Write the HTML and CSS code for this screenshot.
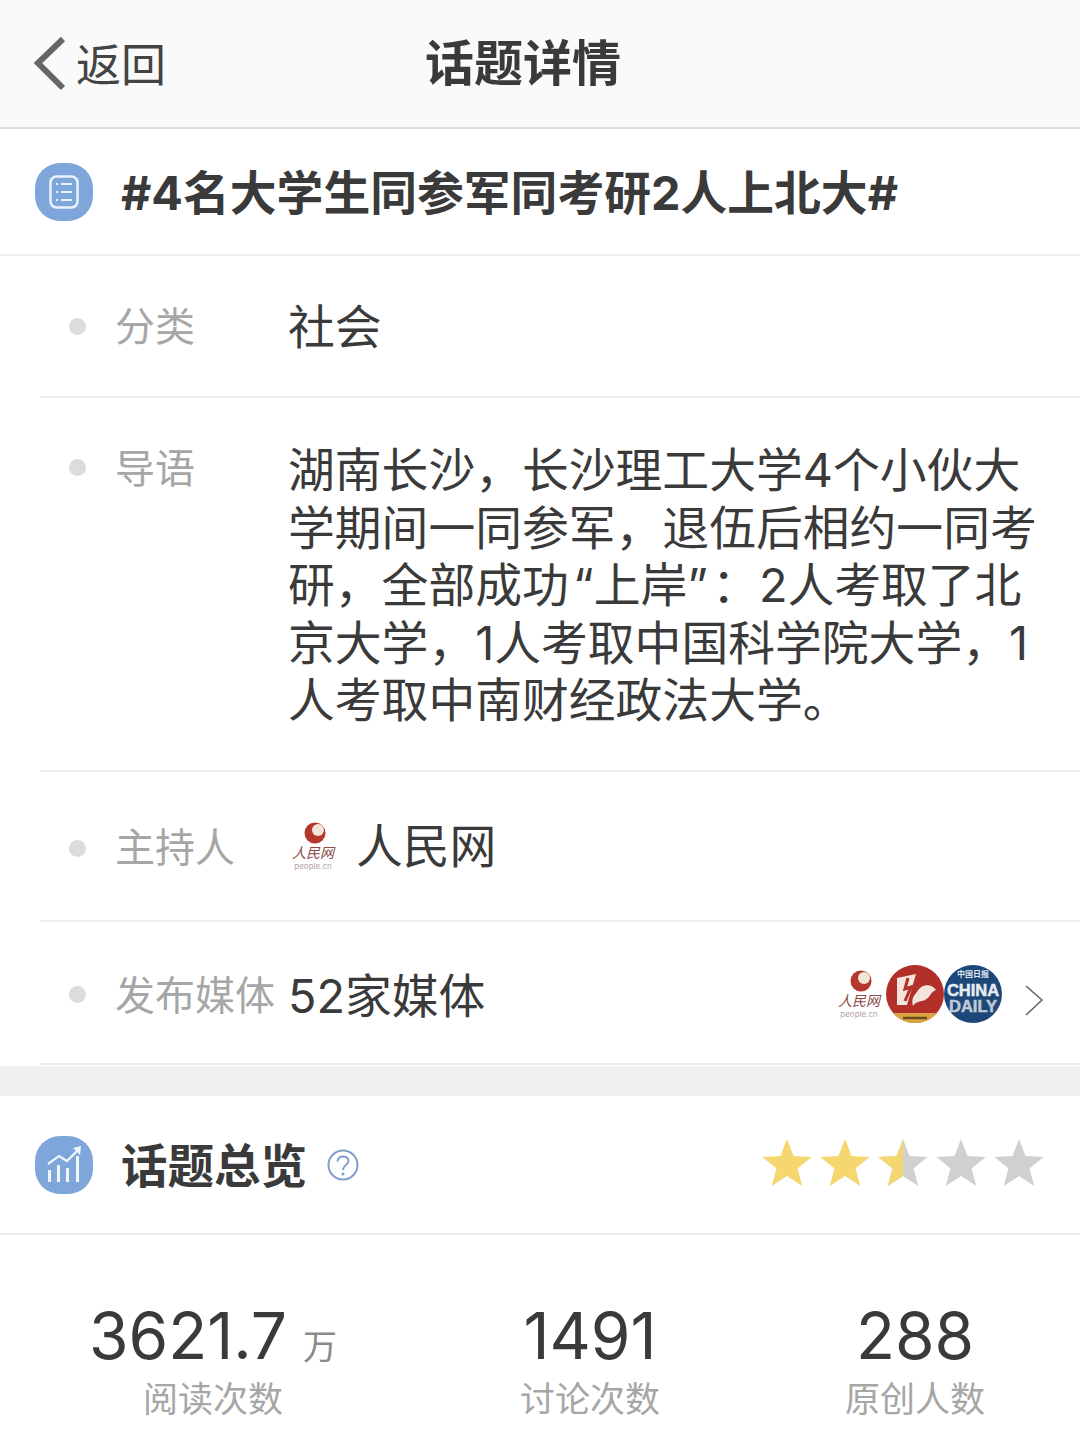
FILE: index.html
```html
<!DOCTYPE html>
<html lang="zh-CN">
<head>
<meta charset="UTF-8">
<title>话题详情</title>
<link rel="stylesheet" href="styles.css">
</head>
<body>
<header class="top-bar">
    <div class="back">
        <svg class="back-arrow" width="34" height="56" viewBox="0 0 34 56"><path d="M30 3 L5 27 L30 52" fill="none" stroke="#666" stroke-width="6"/></svg>
        <span class="back-text">返回</span>
    </div>
    <h1 class="page-title">话题详情</h1>
</header>

<section class="section-head topic-head">
    <svg class="round-icon" viewBox="0 0 58 58">
        <rect width="58" height="58" rx="25" fill="#7ea6da"/>
        <rect x="15.5" y="13.5" width="27" height="31" rx="6" fill="none" stroke="#e9f1fb" stroke-width="2.5"/>
        <path d="M21 21h2M26 21h11M21 29h2M26 29h11M21 37h2M26 37h11" stroke="#e9f1fb" stroke-width="2.2" fill="none"/>
    </svg>
    <h2 class="topic-title">#4名大学生同参军同考研2人上北大#</h2>
</section>

<section class="info-list">
    <div class="info-row row-category">
        <i class="dot"></i>
        <span class="info-label">分类</span>
        <span class="info-value">社会</span>
    </div>
    <div class="info-row row-intro">
        <i class="dot"></i>
        <span class="info-label">导语</span>
        <p class="info-value intro-text">湖南长沙，长沙理工大学4个小伙大学期间一同参军，退伍后相约一同考研，全部成功&#8202;“上岸”&#8202;：2人考取了北京大学，1人考取中国科学院大学，1人考取中南财经政法大学。</p>
    </div>
    <div class="info-row row-host">
        <i class="dot"></i>
        <span class="info-label">主持人</span>
        <svg class="people-logo host-logo" viewBox="0 0 48 52">
            <circle cx="27" cy="13" r="10.500" fill="#b5382c"/>
            <circle cx="30" cy="10" r="6" fill="#f3e6d8"/>
            <text x="25" y="38" text-anchor="middle" class="logo-cn">人民网</text>
            <text x="25" y="49" text-anchor="middle" class="logo-en">people.cn</text>
        </svg>
        <span class="info-value">人民网</span>
    </div>
    <div class="info-row row-media">
        <i class="dot"></i>
        <span class="info-label">发布媒体</span>
        <span class="info-value">52家媒体</span>
        <div class="media-logos">
            <svg class="people-logo" viewBox="0 0 48 52">
                <circle cx="27" cy="13" r="10.500" fill="#b5382c"/>
                <circle cx="30" cy="10" r="6" fill="#f3e6d8"/>
                <text x="25" y="38" text-anchor="middle" class="logo-cn">人民网</text>
                <text x="25" y="49" text-anchor="middle" class="logo-en">people.cn</text>
            </svg>
            <svg class="media-badge" viewBox="0 0 58 58">
                <circle cx="29" cy="29" r="29" fill="#b22f2a"/>
                <path d="M7 48 H51 A29 29 0 0 1 7 48Z" fill="#d9a441"/>
                <path d="M17 53 H41" stroke="#6b4a1e" stroke-width="2.500"/>
                <path d="M11 13 L30 9 L21 40 L11 40Z" fill="#f3e4dc"/>
                <path d="M22 13 L19 24 L25 22 L19 36" fill="none" stroke="#b22f2a" stroke-width="3"/>
                <path d="M31 27 C36 18 46 19 50 25 C44 27 45 32 39 35 C34 37 30 36 27 41 C25 34 28 30 31 27Z" fill="#f3e4dc"/>
            </svg>
            <svg class="media-badge" viewBox="0 0 58 58">
                <circle cx="29" cy="29" r="29" fill="#1d4778"/>
                <text x="29" y="12" text-anchor="middle" class="badge-top">中国日报</text>
                <text x="29" y="31" text-anchor="middle" class="badge-name">CHINA</text>
                <text x="29" y="47" text-anchor="middle" class="badge-name badge-dim">DAILY</text>
            </svg>
        </div>
        <svg class="chevron" width="20" height="32" viewBox="0 0 20 32"><path d="M2 2 L18 16 L2 31" fill="none" stroke="#666" stroke-width="1.6"/></svg>
    </div>
</section>

<div class="band"></div>

<section class="section-head overview-head">
    <svg class="round-icon" viewBox="0 0 58 58">
        <rect width="58" height="58" rx="25" fill="#7ea6da"/>
        <path d="M13 28 L24 20 L32 25 L43 14" fill="none" stroke="#f1f6fc" stroke-width="2.200"/>
        <path d="M38 12 L46 10 L45 19Z" fill="#f1f6fc"/>
        <path d="M14.500 34v12M23.500 29v17M32.500 32v14M42.500 20v26" stroke="#f1f6fc" stroke-width="3" fill="none"/>
    </svg>
    <h2 class="overview-title">话题总览</h2>
    <svg class="help-icon" width="32" height="32" viewBox="0 0 32 32">
        <circle cx="16" cy="16" r="14.500" fill="none" stroke="#7f9fc9" stroke-width="2"/>
        <path d="M10.500 12.500 C11 5.500 21.500 6 21.500 12 C21.500 16 16 16 16 21" fill="none" stroke="#7f9fc9" stroke-width="2"/>
        <circle cx="16" cy="25" r="1.500" fill="#7f9fc9"/>
    </svg>
    <div class="stars">
        <svg class="star" viewBox="0 0 50 48"><path class="star-on" d="M25 0L31.500 17.100 49.700 18 35.500 29.400 40.300 47 25 37 9.700 47 14.500 29.400 .3 18 18.500 17.100Z"/></svg>
        <svg class="star" viewBox="0 0 50 48"><path class="star-on" d="M25 0L31.500 17.100 49.700 18 35.500 29.400 40.300 47 25 37 9.700 47 14.500 29.400 .3 18 18.500 17.100Z"/></svg>
        <svg class="star" viewBox="0 0 50 48">
            <path class="star-off" d="M25 0L31.500 17.100 49.700 18 35.500 29.400 40.300 47 25 37 9.700 47 14.500 29.400 .3 18 18.500 17.100Z"/>
            <path class="star-on" d="M25 0L25 37 9.700 47 14.500 29.400 .3 18 18.500 17.100Z"/>
        </svg>
        <svg class="star" viewBox="0 0 50 48"><path class="star-off" d="M25 0L31.500 17.100 49.700 18 35.500 29.400 40.300 47 25 37 9.700 47 14.500 29.400 .3 18 18.500 17.100Z"/></svg>
        <svg class="star" viewBox="0 0 50 48"><path class="star-off" d="M25 0L31.500 17.100 49.700 18 35.500 29.400 40.300 47 25 37 9.700 47 14.500 29.400 .3 18 18.500 17.100Z"/></svg>
    </div>
</section>

<section class="stats">
    <div class="stat">
        <div class="stat-num">3621.7<span class="stat-unit">万</span></div>
        <div class="stat-label">阅读次数</div>
    </div>
    <div class="stat">
        <div class="stat-num">1491</div>
        <div class="stat-label">讨论次数</div>
    </div>
    <div class="stat">
        <div class="stat-num">288</div>
        <div class="stat-label">原创人数</div>
    </div>
</section>
</body>
</html>
```

FILE: styles.css
```css
* {
    box-sizing: border-box;
}
html, body {
    height: 1439px;
    overflow: hidden;
}
body {
    margin: 0;
    background: #fff;
    color: #3a3a3a;
    font-family: Inter, "Noto Sans CJK SC", sans-serif;
}
h1, h2, p {
    margin: 0;
}

/* top bar */
.top-bar {
    height: 129px;
    background: #fafafa;
    border-bottom: 2px solid #dcdcdc;
    display: flex;
    align-items: center;
    padding-left: 33px;
}
.back {
    display: flex;
    align-items: center;
    width: 392px;
    font-size: 45px;
    line-height: 1;
    color: #444;
}
.back-arrow {
    margin-right: 9px;
}
.back-text {
    padding-top: 4px;
}
.page-title {
    font-size: 49px;
    font-weight: 700;
    line-height: 1;
}

/* section headers */
.section-head {
    display: flex;
    align-items: center;
    padding-left: 35px;
    border-bottom: 2px solid #ececec;
}
.topic-head {
    height: 127px;
}
.overview-head {
    height: 139px;
}
.round-icon {
    width: 58px;
    height: 58px;
    flex: none;
}
.topic-title {
    margin-left: 28px;
    padding-bottom: 5px;
    font-size: 46.800px;
    font-weight: 700;
    white-space: nowrap;
}
.overview-title {
    margin-left: 28px;
    padding-bottom: 4px;
    font-size: 46.500px;
    font-weight: 700;
}
.help-icon {
    margin-left: 20px;
}
.stars {
    margin-left: auto;
    margin-right: 36px;
    margin-bottom: 4px;
    display: flex;
    gap: 8px;
}
.star {
    width: 50px;
    height: 48px;
}
.star-on {
    fill: #f5d66f;
}
.star-off {
    fill: #d0d0d0;
}

/* info rows */
.info-row {
    margin-left: 40px;
    display: flex;
    align-items: center;
    border-bottom: 2px solid #ececec;
    font-size: 46.800px;
}
.row-category {
    height: 142px;
}
.row-intro {
    height: 374px;
    align-items: flex-start;
    padding-top: 44px;
}
.row-host {
    height: 150px;
}
.row-media {
    height: 143px;
}
.dot {
    flex: none;
    width: 17px;
    height: 17px;
    margin-left: 29px;
    margin-right: 29px;
    border-radius: 50%;
    background: #dcdcdc;
}
.row-intro .dot {
    margin-top: 17px;
}
.row-host .dot, .row-media .dot {
    margin-top: 4px;
}
.info-label {
    flex: none;
    width: 173px;
    font-size: 40px;
    line-height: 1.2;
    color: #a6a6a6;
}
.row-category .info-label {
    padding-top: 2px;
}
.row-intro .info-label {
    margin-top: 3px;
}
.row-host .info-label {
    padding-top: 4px;
}
.row-media .info-label {
    padding-top: 6px;
}
.info-value {
    line-height: 1.24;
    color: #3a3a3a;
}
.row-category .info-value {
    padding-top: 2px;
}
.row-host .info-value {
    padding-top: 1px;
}
.row-media .info-value {
    padding-top: 8px;
}
.intro-text {
    width: 770px;
    line-height: 57.500px;
}
.host-logo {
    margin-right: 20px;
}
.people-logo {
    flex: none;
    width: 48px;
    height: 52px;
}
.logo-cn {
    font-size: 14px;
    font-style: italic;
    fill: #8a4a48;
}
.logo-en {
    font-size: 8px;
    fill: #b5a5a5;
}
.media-logos {
    margin-left: auto;
    display: flex;
    align-items: center;
    margin-top: 2px;
}
.media-logos .people-logo {
    margin-right: 4px;
}
.media-badge {
    width: 58px;
    height: 58px;
}
.badge-top {
    font-size: 8px;
    font-weight: 700;
    fill: #dfe6ee;
}
.badge-name {
    font-family: "Liberation Sans", sans-serif;
    font-size: 16.500px;
    font-weight: 700;
    fill: #e6ebf1;
    stroke: #e6ebf1;
    stroke-width: .5px;
}
.badge-dim {
    fill: #c0cad6;
    stroke: #c0cad6;
}
.chevron {
    margin-left: 22px;
    margin-right: 36px;
    margin-top: 14px;
}

.band {
    height: 30px;
    margin-top: 1px;
    background: #efefef;
}

/* numbers */
.stats {
    display: grid;
    grid-template-columns: 426px 328px 322px;
    padding-top: 61px;
    text-align: center;
}
.stat-num {
    height: 80px;
    font-size: 64px;
    line-height: 80px;
    font-weight: 400;
    color: #3a3a3a;
}
.stat-unit {
    font-size: 34px;
    margin-left: 16px;
    line-height: 1;
    color: #8a8a8a;
}
.stat-label {
    font-size: 35px;
    line-height: 46px;
    color: #a6a6a6;
}
```
